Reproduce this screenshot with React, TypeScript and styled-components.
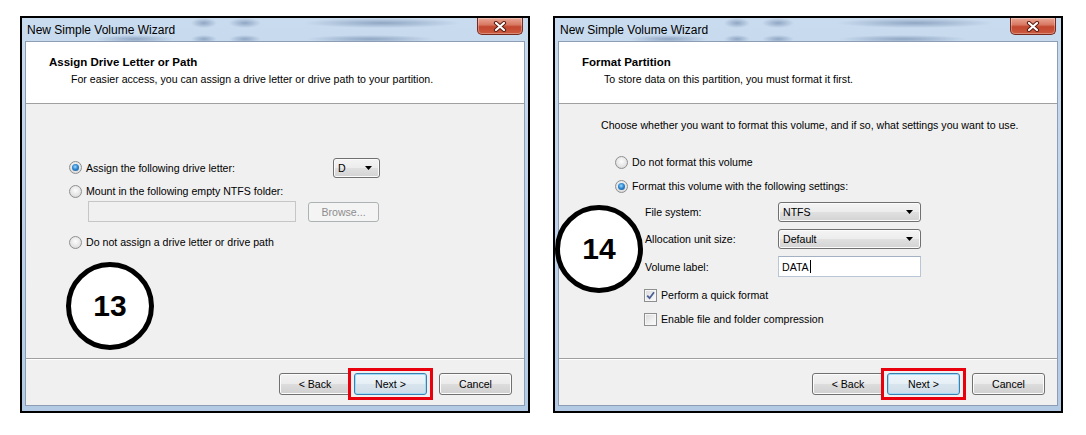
import styled, { createGlobalStyle, css } from 'styled-components';

const GlobalStyle = createGlobalStyle`
  * {
    box-sizing: border-box;
  }
  body {
    margin: 0;
    background: #fff;
    font-family: "Liberation Sans", Arial, sans-serif;
    font-size: 10.6px;
    color: #000;
  }
`;

function Arrow() {
  return (
    <svg width="7" height="4" viewBox="0 0 7 4">
      <path d="M0 0 L7 0 L3.5 4 Z" fill="#000" />
    </svg>
  );
}

function CloseGlyph() {
  return (
    <svg width="14" height="11" viewBox="0 0 14 11">
      <path d="M3 2 L11 9 M11 2 L3 9" stroke="#5a1d12" strokeWidth="4.2" strokeLinecap="round" />
      <path d="M3 2 L11 9 M11 2 L3 9" stroke="#fff" strokeWidth="2.2" strokeLinecap="round" />
    </svg>
  );
}

function Check() {
  return (
    <svg width="9" height="9" viewBox="0 0 9 9">
      <path d="M1.2 4.6 L3.6 7.2 L8 1.2" stroke="#4b5f96" strokeWidth="1.8" fill="none" />
    </svg>
  );
}

type WizardProps = {
  title: string;
  subtitle: string;
  children: React.ReactNode;
};

function Wizard({ title, subtitle, children }: WizardProps) {
  return (
    <Window>
      <TitleBar>
        <Caption>New Simple Volume Wizard</Caption>
        <CloseButton aria-label="Close">
          <CloseGlyph />
        </CloseButton>
      </TitleBar>
      <Content>
        <Header>
          <HeaderTitle>{title}</HeaderTitle>
          <HeaderSub>{subtitle}</HeaderSub>
        </Header>
        {children}
        <Footer>
          <Button $w={72}>&lt; Back</Button>
          <Highlight>
            <Button $w={73} $primary>
              Next &gt;
            </Button>
          </Highlight>
          <Button $w={73} $gap={9}>
            Cancel
          </Button>
        </Footer>
      </Content>
    </Window>
  );
}

export default function App() {
  return (
    <>
      <GlobalStyle />
      <Page>
        <Wizard
          title="Assign Drive Letter or Path"
          subtitle="For easier access, you can assign a drive letter or drive path to your partition."
        >
          <Body $pad="53px 0 0 43px">
            <DriveRow>
              <Option>
                <Radio $checked />
                Assign the following drive letter:
              </Option>
              <Select $w={47}>
                D
                <Arrow />
              </Select>
            </DriveRow>
            <Option $mt={6}>
              <Radio />
              Mount in the following empty NTFS folder:
            </Option>
            <FolderRow>
              <TextBox $w={208} $disabled />
              <Button $w={71} $h={20} $disabled>
                Browse...
              </Button>
            </FolderRow>
            <Option $mt={13}>
              <Radio />
              Do not assign a drive letter or drive path
            </Option>
            <Callout $left={40} $top={158}>
              13
            </Callout>
          </Body>
        </Wizard>

        <Wizard
          title="Format Partition"
          subtitle="To store data on this partition, you must format it first."
        >
          <Body $pad="14px 0 0 42px">
            <Instruction>
              Choose whether you want to format this volume, and if so, what settings you want to use.
            </Instruction>
            <Option $mt={23} $ml={14}>
              <Radio />
              Do not format this volume
            </Option>
            <Option $mt={10} $ml={14}>
              <Radio $checked />
              Format this volume with the following settings:
            </Option>
            <Settings>
              <FieldLabel>File system:</FieldLabel>
              <Select $w={143}>
                NTFS
                <Arrow />
              </Select>
              <FieldLabel>Allocation unit size:</FieldLabel>
              <Select $w={143}>
                Default
                <Arrow />
              </Select>
              <FieldLabel>Volume label:</FieldLabel>
              <TextBox $w={143}>
                DATA
                <Caret />
              </TextBox>
            </Settings>
            <Option $mt={11} $ml={43}>
              <Checkbox>
                <Check />
              </Checkbox>
              Perform a quick format
            </Option>
            <Option $mt={10} $ml={43}>
              <Checkbox />
              Enable file and folder compression
            </Option>
            <Callout $left={-4} $top={101}>
              14
            </Callout>
          </Body>
        </Wizard>
      </Page>
    </>
  );
}

const blur = 'rgba(64, 94, 136, 0.42)';

const Page = styled.div`
  display: flex;
  gap: 23px;
  padding: 16px 0 0 20px;
`;

const Window = styled.section`
  width: 510px;
  height: 397px;
  border: 2px solid #000;
  padding: 0 3px 5px;
  display: flex;
  flex-direction: column;
  background: linear-gradient(180deg, #c9dbee 0%, #bdd2ea 55%, #b3cae5 100%);
`;

const TitleBar = styled.header`
  height: 23px;
  display: flex;
  align-items: center;
  padding-left: 2px;
  background:
    radial-gradient(ellipse 13px 5px at 179px 5px, ${blur}, transparent),
    radial-gradient(ellipse 16px 5px at 220px 5px, ${blur}, transparent),
    radial-gradient(ellipse 78px 5px at 357px 5px, ${blur}, transparent),
    radial-gradient(ellipse 40px 4px at 110px 21px, ${blur}, transparent),
    radial-gradient(ellipse 13px 4px at 179px 21px, ${blur}, transparent),
    radial-gradient(ellipse 16px 4px at 220px 21px, ${blur}, transparent),
    radial-gradient(ellipse 64px 4px at 345px 21px, ${blur}, transparent);
`;

const Caption = styled.span`
  font-size: 12px;
  color: #000;
`;

const CloseButton = styled.button`
  margin-left: auto;
  margin-right: 2px;
  align-self: flex-start;
  width: 46px;
  height: 17px;
  padding: 0;
  border: 1px solid #76291d;
  border-top: none;
  border-radius: 0 0 5px 5px;
  background: linear-gradient(180deg, #eba695 0%, #d87862 42%, #c2472f 55%, #cc5a3f 100%);
  box-shadow: inset 0 0 0 1px rgba(255, 255, 255, 0.3);
  display: flex;
  align-items: center;
  justify-content: center;
`;

const Content = styled.div`
  flex: 1;
  display: flex;
  flex-direction: column;
  border: 1px solid #8d9db3;
  background: #f0f0f0;
`;

const Header = styled.div`
  height: 62px;
  background: #fff;
  border-bottom: 1px solid #a0a0a0;
  padding: 13px 0 0 23px;
`;

const HeaderTitle = styled.div`
  font-weight: bold;
  font-size: 11.5px;
  line-height: 14px;
`;

const HeaderSub = styled.div`
  margin: 3px 0 0 22px;
  line-height: 14px;
`;

const Body = styled.div<{ $pad: string }>`
  flex: 1;
  position: relative;
  padding: ${(p) => p.$pad};
  display: flex;
  flex-direction: column;
  align-items: flex-start;
`;

const Instruction = styled.div`
  line-height: 14px;
`;

const Option = styled.div<{ $mt?: number; $ml?: number }>`
  display: flex;
  align-items: center;
  gap: 4px;
  height: 14px;
  margin-top: ${(p) => p.$mt ?? 0}px;
  margin-left: ${(p) => p.$ml ?? 0}px;
  white-space: nowrap;
`;

const Radio = styled.span<{ $checked?: boolean }>`
  width: 13px;
  height: 13px;
  flex-shrink: 0;
  border-radius: 50%;
  border: 1px solid #8e8f8f;
  background: radial-gradient(circle at 50% 40%, #fdfdfd 0%, #e4e4e4 60%, #cbcbcb 100%);
  display: inline-flex;
  align-items: center;
  justify-content: center;

  &::after {
    content: '';
    width: 7px;
    height: 7px;
    border-radius: 50%;
    background: radial-gradient(circle at 45% 40%, #9bdcff 0%, #2f86cf 45%, #184f86 100%);
    display: ${(p) => (p.$checked ? 'block' : 'none')};
  }
`;

const Checkbox = styled.span`
  width: 13px;
  height: 13px;
  flex-shrink: 0;
  border: 1px solid #8e8f8f;
  background: linear-gradient(135deg, #d9d9d9 0%, #f0f0f0 60%, #fbfbfb 100%);
  box-shadow: inset 0 0 0 1px #f6f6f6;
  display: inline-flex;
  align-items: center;
  justify-content: center;
`;

const DriveRow = styled.div`
  width: 311px;
  height: 21px;
  display: flex;
  align-items: center;
  justify-content: space-between;
`;

const FolderRow = styled.div`
  display: flex;
  align-items: center;
  gap: 12px;
  margin: 3px 0 0 19px;
`;

const Select = styled.div<{ $w: number }>`
  width: ${(p) => p.$w}px;
  height: 20px;
  padding: 0 7px 0 4px;
  border: 1px solid #707070;
  border-radius: 3px;
  background: linear-gradient(180deg, #f4f4f4 0%, #ececec 50%, #e0e0e0 51%, #d3d3d3 100%);
  box-shadow: inset 0 0 0 1px #fbfbfb;
  display: flex;
  align-items: center;
  justify-content: space-between;
`;

const TextBox = styled.div<{ $w: number; $disabled?: boolean }>`
  width: ${(p) => p.$w}px;
  height: 21px;
  padding-left: 3px;
  display: flex;
  align-items: center;
  ${(p) =>
    p.$disabled
      ? css`
          background: #f0f0f0;
          border: 1px solid #c6c6c6;
        `
      : css`
          background: #fff;
          border: 1px solid #b9c6d6;
          border-top-color: #a3b1c3;
        `}
`;

const Caret = styled.span`
  width: 1px;
  height: 13px;
  background: #000;
  margin-left: 1px;
`;

const Settings = styled.div`
  display: grid;
  grid-template-columns: 133px 143px;
  grid-template-rows: 20px 20px 21px;
  row-gap: 7px;
  margin: 9px 0 0 44px;
`;

const FieldLabel = styled.div`
  align-self: center;
  line-height: 14px;
`;

const Footer = styled.div`
  height: 47px;
  border-top: 1px solid #a0a0a0;
  box-shadow: inset 0 1px 0 #fff;
  display: flex;
  justify-content: flex-end;
  align-items: flex-start;
  gap: 3px;
  padding: 14px 12px 0 0;
`;

const Highlight = styled.span`
  display: flex;
  margin: -5px -6px;
  padding: 2px 3px;
  border: 3px solid #e8000c;
`;

const Button = styled.button<{
  $w: number;
  $h?: number;
  $gap?: number;
  $primary?: boolean;
  $disabled?: boolean;
}>`
  width: ${(p) => p.$w}px;
  height: ${(p) => p.$h ?? 22}px;
  margin-left: ${(p) => p.$gap ?? 0}px;
  padding: 0;
  font: 10.6px "Liberation Sans", Arial, sans-serif;
  color: #000;
  border: 1px solid #707070;
  border-radius: 3px;
  background: linear-gradient(180deg, #f2f2f2 0%, #ebebeb 50%, #dddddd 51%, #cfcfcf 100%);
  box-shadow: inset 0 0 0 1px #fcfcfc;

  ${(p) =>
    p.$primary &&
    css`
      border-color: #3c7fb1;
      box-shadow: inset 0 0 0 1px #9fdcf8;
      background: linear-gradient(180deg, #eef6fb 0%, #e6eff5 50%, #d9e5ee 51%, #cfdde8 100%);
    `}

  ${(p) =>
    p.$disabled &&
    css`
      color: #8d8d8d;
      border-color: #adb2b5;
      background: #f4f4f4;
      box-shadow: none;
    `}
`;

const Callout = styled.div<{ $left: number; $top: number }>`
  position: absolute;
  left: ${(p) => p.$left}px;
  top: ${(p) => p.$top}px;
  width: 88px;
  height: 88px;
  border: 5px solid #000;
  border-radius: 50%;
  background: #fff;
  display: flex;
  align-items: center;
  justify-content: center;
  font: bold 30px "Liberation Sans", Arial, sans-serif;
`;
